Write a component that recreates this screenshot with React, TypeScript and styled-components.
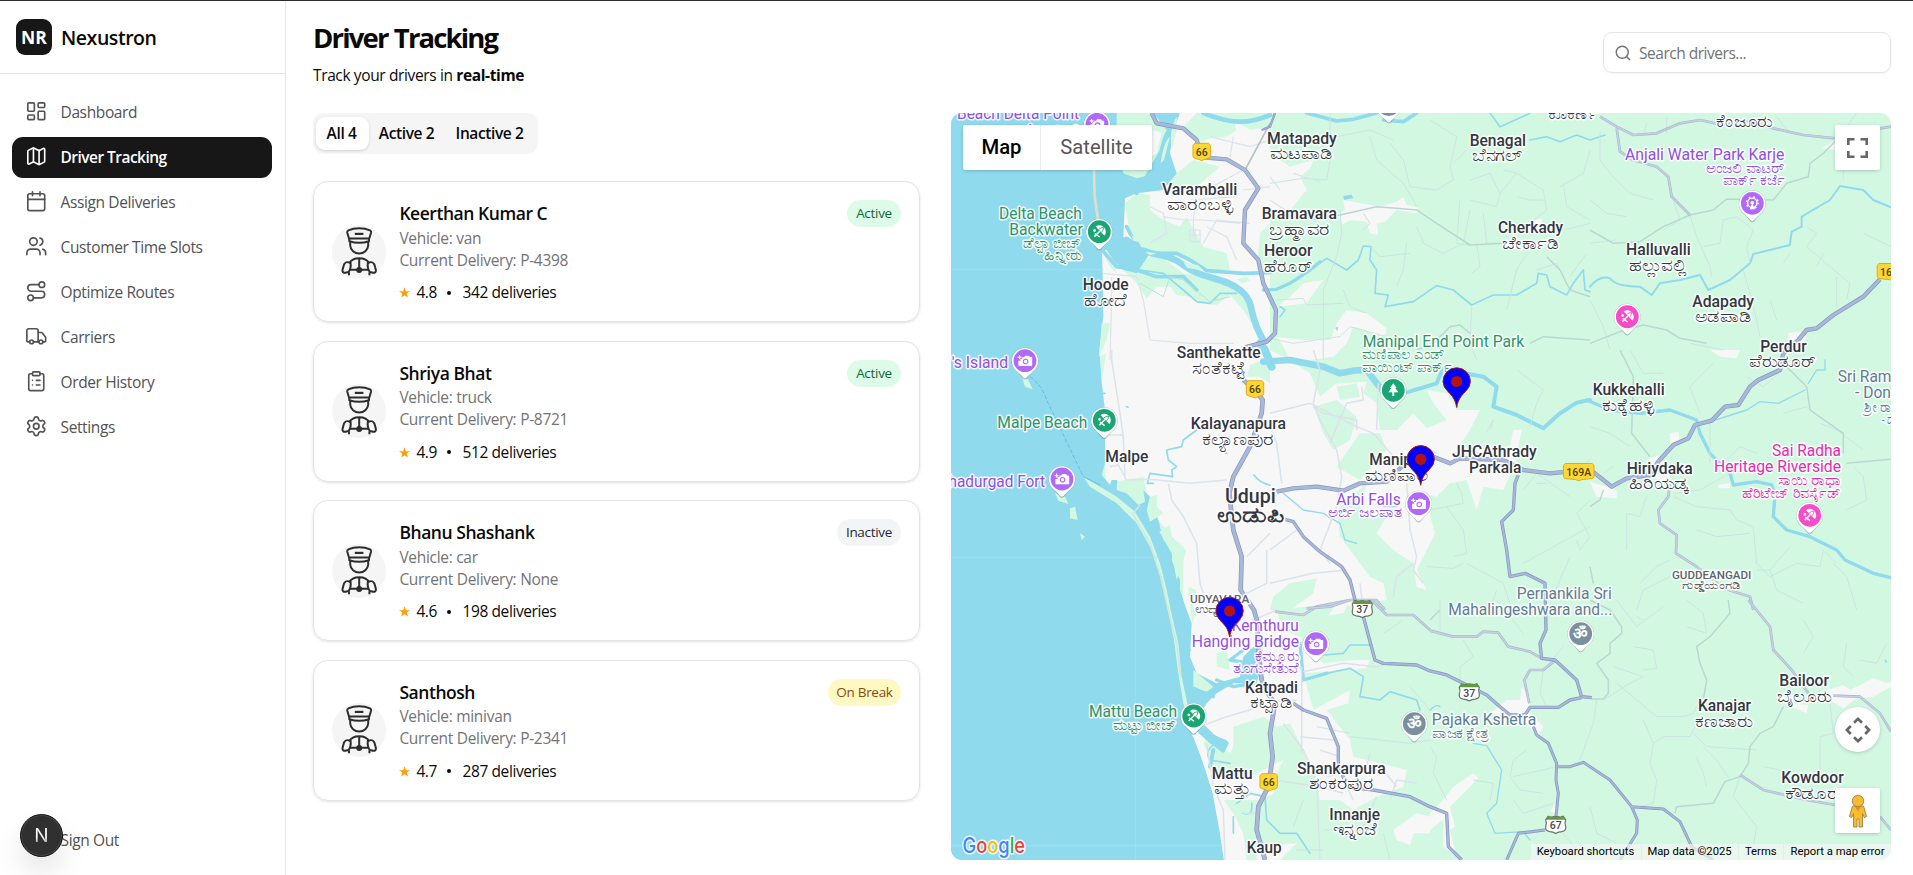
import React from 'react';
import styled, { createGlobalStyle } from 'styled-components';
import {
  Calendar, ClipboardList, LayoutDashboard, LogOut, Map as MapIcon, Route, Search, Settings, Truck, Users,
} from 'lucide-react';

const Global = createGlobalStyle`
  * { box-sizing: border-box; }
  html, body { margin: 0; height: 100%; background: #fff; overflow: hidden; }
  body { font-family: "Segoe UI", "Open Sans", "Noto Sans", sans-serif; color: #0a0a0a; }
`;

const Page = styled.div`
  display: flex;
  height: 100vh;
  border-top: 1px solid #2b2a33;
`;

/* ---------- Sidebar ---------- */
const Sidebar = styled.aside`
  display: flex;
  flex-direction: column;
  flex: none;
  width: 286px;
  border-right: 1px solid #e5e5e5;
`;
const Brand = styled.div`
  display: flex;
  align-items: center;
  gap: 9px;
  height: 73px;
  padding-left: 16px;
  border-bottom: 1px solid #e5e5e5;
`;
const BrandMark = styled.div`
  display: grid;
  place-items: center;
  width: 36px;
  height: 36px;
  border-radius: 9px;
  background: #171717;
  color: #fff;
  font-size: 17.5px;
  line-height: 20px;
  font-weight: 700;
`;
const BrandName = styled.div`
  font-size: 19.5px;
  font-weight: 600;
  letter-spacing: -0.45px;
`;
const Nav = styled.nav`
  display: flex;
  flex-direction: column;
  gap: 4px;
  padding: 18px 13px 0 12px;
`;
const NavItem = styled.a<{ $active?: boolean }>`
  display: flex;
  align-items: center;
  gap: 13px;
  height: 41px;
  padding: 0 13px 2px;
  border-radius: 11px;
  font-size: 15.5px;
  letter-spacing: ${(p) => (p.$active ? '-0.53px' : '-0.37px')};
  font-weight: ${(p) => (p.$active ? 600 : 400)};
  color: ${(p) => (p.$active ? '#fff' : '#525252')};
  background: ${(p) => (p.$active ? '#171717' : 'transparent')};
  svg { width: 22.5px; height: 22.5px; stroke-width: 1.75; flex: none; }
`;
const SideFoot = styled.div`
  margin-top: auto;
  padding: 0 13px 14px 12px;
`;
const DevBadge = styled.div`
  position: fixed;
  left: 20px;
  top: 814px;
  display: grid;
  place-items: center;
  width: 43px;
  height: 43px;
  border-radius: 50%;
  background: #303030;
  border: 1px solid #111;
  box-shadow: inset 0 0 0 1px #474747, 0 16px 32px -8px rgba(0, 0, 0, 0.24);
  color: transparent;
  font: 400 19px/20px Inter, sans-serif;
  span {
    background: linear-gradient(to bottom, #fff 55%, #8a8a8a 95%);
    background-clip: text;
    -webkit-background-clip: text;
  }
`;

/* ---------- Main ---------- */
const Main = styled.main`
  display: flex;
  flex-direction: column;
  flex: 1;
  min-width: 0;
  padding: 0 22px 15px 27px;
`;
const Header = styled.header`
  display: flex;
  justify-content: space-between;
  height: 112px;
`;
const Title = styled.h1`
  margin: 18px 0 0;
  font-size: 27.5px;
  line-height: 38px;
  font-weight: 700;
  letter-spacing: -1.85px;
  word-spacing: 1px;
`;
const Subtitle = styled.p`
  margin: 6px 0 0;
  font-size: 15.5px;
  line-height: 24px;
  letter-spacing: -0.37px;
`;
const SearchBox = styled.label`
  display: flex;
  align-items: center;
  gap: 7px;
  width: 288px;
  height: 41px;
  margin-top: 31px;
  padding: 0 10px;
  border: 1px solid #e5e5e5;
  border-radius: 9px;
  box-shadow: 0 1px 2px rgba(0, 0, 0, 0.05);
  color: #737373;
  svg { width: 18px; height: 18px; stroke-width: 1.9; flex: none; }
`;
const SearchInput = styled.input`
  flex: 1;
  min-width: 0;
  border: 0;
  outline: 0;
  padding: 0;
  background: none;
  font: inherit;
  font-size: 15.5px;
  letter-spacing: -0.48px;
  &::placeholder { color: #737373; opacity: 1; }
`;
const Body = styled.div`
  display: flex;
  gap: 31px;
  flex: 1;
  min-height: 0;
`;
const ListColumn = styled.section`
  display: flex;
  flex-direction: column;
  width: 607px;
  flex: none;
`;
const Tabs = styled.div`
  display: flex;
  align-self: flex-start;
  align-items: center;
  width: 225px;
  height: 41px;
  padding: 0 3px;
  border-radius: 11px;
  background: #f5f5f5;
  margin-bottom: 27px;
`;
const Tab = styled.button<{ $active?: boolean; $w: number }>`
  width: ${(p) => p.$w}px;
  height: 33px;
  padding: 0 2px 2px 0;
  border: 0;
  border-radius: 9px;
  background: ${(p) => (p.$active ? '#fff' : 'none')};
  box-shadow: ${(p) => (p.$active ? '0 1px 3px rgba(0,0,0,.14)' : 'none')};
  font: inherit;
  font-size: 15.5px;
  font-weight: 600;
  letter-spacing: -0.4px;
  color: #0a0a0a;
  white-space: nowrap;
`;
const Cards = styled.div`
  display: flex;
  flex-direction: column;
  gap: 18.5px;
`;
const Card = styled.article`
  display: flex;
  align-items: center;
  height: 141px;
  padding: 0 18px;
  border: 1px solid #e3e3e3;
  border-radius: 15px;
  box-shadow: 0 1px 3px rgba(0, 0, 0, 0.12);
`;
const Avatar = styled.div`
  width: 54px;
  height: 54px;
  border-radius: 50%;
  background: #f5f5f5;
  svg { display: block; overflow: visible; }
`;
const Info = styled.div`
  flex: 1;
  align-self: stretch;
  padding: 18px 0 0 13.4px;
`;
const Name = styled.div`
  font-size: 17.5px;
  line-height: 26.5px;
  font-weight: 600;
  letter-spacing: -0.45px;
`;
const Meta = styled.div`
  font-size: 15.5px;
  line-height: 22.3px;
  letter-spacing: -0.3px;
  color: #737373;
`;
const Rating = styled.div`
  display: flex;
  align-items: center;
  margin-top: 10px;
  font-size: 15.5px;
  line-height: 22px;
  letter-spacing: -0.4px;
  svg { margin: 1px 6px 0 0; }
`;
const Dot = styled.span`
  width: 4px;
  height: 4px;
  border-radius: 50%;
  background: #0a0a0a;
  margin: 1px 11.5px 0 10px;
`;
type Status = 'Active' | 'Inactive' | 'On Break';
const tones: Record<Status, [string, string, number]> = {
  Active: ['#dcfce7', '#166534', 54],
  Inactive: ['#f3f4f6', '#1f2937', 64],
  'On Break': ['#fef9c3', '#854d0e', 73],
};
const Badge = styled.span<{ $s: Status }>`
  align-self: flex-start;
  margin-top: 18px;
  width: ${(p) => tones[p.$s][2]}px;
  height: 27px;
  line-height: 27px;
  border-radius: 14px;
  text-align: center;
  background: ${(p) => tones[p.$s][0]};
  color: ${(p) => tones[p.$s][1]};
  font-size: 13.5px;
  letter-spacing: -0.3px;
`;

const DriverGlyph = () => (
  <svg width="54" height="54" viewBox="0 0 54 54" fill="none" stroke="#2d2d2d" strokeWidth="2" strokeLinejoin="round" strokeLinecap="butt">
    <path d="M17 13.5L15.2 7.5C15 6.3 15.5 5.8 16.4 5.3C22.5 2.4 31.8 2.4 38 5.3C38.9 5.8 39.4 6.3 39.1 7.5L37.3 13.5Z" />
    <path d="M22.8 8.9H31.4" strokeWidth="2.2" />
    <path d="M17.3 13.8V16.2C23 18 31.4 18 37 16.2V13.8" />
    <path d="M18.2 17V20.5C18.6 25.2 22.4 28.6 27.2 28.6C32 28.6 35.8 25.2 36.2 20.5V17" />
    <path d="M17.2 38.5C18.8 35.2 22.4 33.3 27.2 33.3C32 33.3 35.6 35.2 37.2 38.5M18 44.8H36.4M27.2 33.5V43" />
    <circle cx="27.2" cy="45" r="3" fill="#2d2d2d" strokeWidth="0" />
    <path d="M18.6 37.8C14 36.2 12.8 37.4 11.8 40.2L10.5 45C10.2 46.9 11.4 48 13.4 47.8L16.5 47C18.4 44.5 19 41 18.6 37.8ZM35.8 37.8C40.4 36.2 41.6 37.4 42.6 40.2L43.9 45C44.2 46.9 43 48 41 47.8L37.9 47C36 44.5 35.4 41 35.8 37.8Z" />
    <path d="M17 47.2V50.3M37.4 47.2V50.3" />
  </svg>
);

/* ---------- Map ---------- */
const MapPanel = styled.section`
  position: relative;
  flex: 1;
  border-radius: 11px;
  overflow: hidden;
  background: #d3f8e2;
  font-family: Roboto, sans-serif;
  svg { display: block; }
`;
const MapCanvas = styled.svg`
  width: 940px;
  height: 747px;
`;
const Town = styled.path`fill: #f7f7f7;`;
const Wood = styled.path`fill: #d3f8e2;`;
const Water = styled.path`fill: #90daee;`;
const River = styled.path<{ $w?: number }>`
  fill: none;
  stroke: #90daee;
  stroke-width: ${(p) => p.$w ?? 6};
  stroke-linejoin: round;
  stroke-linecap: round;
`;
const Lane = styled.path<{ $c?: string; $w?: number }>`
  fill: none;
  stroke: ${(p) => p.$c ?? '#dbe3ea'};
  stroke-width: ${(p) => p.$w ?? 3.5};
  stroke-linejoin: round;
`;
const Highway = ({ d, w = 11 }: { d: string; w?: number }) => (
  <>
    <Lane d={d} $c="#8696be" $w={w} />
    <Lane d={d} $c="#a8b8d8" $w={w - 4} />
  </>
);
const Street = ({ d }: { d: string }) => (
  <>
    <Lane d={d} $c="#a9b4cd" $w={8} />
    <Lane d={d} $c="#c7d0e2" $w={4.5} />
  </>
);
const tileAt = { A: [0, 0], B: [960, 0], C: [1920, -330], D: [0, 720], E: [960, 720], F: [1920, 720], G: [0, 1470], H: [1440, 1470] } as const;
const Tile = ({ id, children }: { id: keyof typeof tileAt; children: React.ReactNode }) => (
  <g transform={`translate(${tileAt[id][0]} ${tileAt[id][1]})`}>{children}</g>
);

const Terrain = () => (
  <g transform="translate(950 110) scale(0.33333)">
    <Tile id="A"><Town d="M500 9H960V750H445L458 500L452 420L520 380L525 260L590 210Z" /></Tile>
    <Tile id="B">
      <Town d="M0 130L60 170L130 150L120 175L90 200L110 240L60 300L0 330ZM220 270L330 290L380 275L400 262L410 285L445 293L440 310L380 300L345 335L320 340L325 375L300 370L290 335L240 330L215 345L205 310L225 300ZM20 590L60 560L100 520L160 510L130 550L110 580ZM20 680L100 690L180 690L200 640L230 600L290 610L350 655L345 680L300 665L250 650L230 700L190 740L120 750H60L40 710ZM780 335L815 325L820 360L790 370Z" />
    </Tile>
    <Tile id="D"><Town d="M445 0H960V780H700V600L600 480L580 380L470 400L465 340V180Z" /></Tile>
    <Tile id="E">
      <Town d="M0 0L40 20L120 70L150 140L200 100L290 95L280 130L320 160L330 240L380 240L430 190L470 235L530 210L490 160L470 120L530 130L560 180L630 180L600 240L560 300L640 290L720 290L730 240L755 240L745 290L740 330L700 420L640 410L620 480L590 390L540 400L500 440L460 430L495 550L470 600L440 660L470 720L440 710L430 640L370 600L320 550L350 500L270 480L290 400L200 480L210 560L270 640L300 680L340 700L350 750L220 770L130 780H0Z" />
    </Tile>
    <Tile id="F"><Town d="M170 330L205 315L230 350L245 400L200 390ZM240 250L265 245L270 280L240 290ZM0 395L80 420V445L20 440ZM360 0H450L440 25L390 20ZM385 405L420 400V415H385Z" /></Tile>
    <Tile id="C"><Town d="M695 445L740 420L760 420L735 450ZM595 1000L630 995L650 1015L620 1050H595Z" /></Tile>
    <Tile id="G">
      <Town d="M700 0H1200L1180 40L1040 60L1060 140L1120 190L1200 180L1260 180L1250 205L1060 220L1090 330L1200 270L1195 310L1130 330L1200 420L1210 470L1370 510L1360 560L1280 590L1210 630L1170 600L1110 600L1100 540L1050 430L1020 370L980 380L940 350L850 380L850 460L810 450L780 400L760 430L800 520L900 530L960 500L1000 480L980 520L970 580L930 600L820 600L850 640L880 700L890 780H820L705 300L720 150ZM920 740L1040 730L990 780H920ZM1330 690L1400 640L1440 650V700H1390L1380 735L1340 720Z" />
    </Tile>
    <Tile id="H">
      <Town d="M180 340L230 300L270 300L275 260L300 290V340L340 380L320 410L290 370L240 350ZM40 600L70 560L130 520L145 535L90 590L60 620L75 680L60 690L80 770L40 740ZM1060 310L1135 315L1130 340ZM1190 270L1240 255L1260 270L1330 235L1370 250L1383 245V260L1330 290L1280 295L1240 325L1200 300ZM360 635L375 610L385 640ZM0 640L40 600L50 650L0 690Z" />
    </Tile>

    <Tile id="A">
      <Wood d="M740 9H830L850 30L860 60L830 80L780 85L755 95L700 50ZM600 230L680 190L730 150L810 170L740 230L700 250L640 235ZM525 280L560 250L600 255L600 300L640 330L690 350L710 320L760 410L830 430L840 480L760 480L690 440L600 430L540 370ZM930 370L960 340V480H920ZM830 9H960V50L900 60L850 30ZM520 480L620 430L700 490L790 500L860 540L900 590L905 640L880 600L840 555L800 585L760 580L720 560L680 555L660 530L620 530L590 565L560 520Z" />
    </Tile>
    <Tile id="D"><Wood d="M900 45L960 20V100L930 80L890 80ZM448 20L468 10L455 100Z" /></Tile>
    <Tile id="E">
      <Wood d="M130 170L200 150L260 200L240 270L190 300L160 250ZM270 250L330 250L350 300L310 345L270 390L200 350ZM60 700L140 685L130 730L60 780H0L10 740ZM200 110L260 100L270 140L210 150Z" />
    </Tile>
    <Tile id="G"><Wood d="M980 30L1160 10L1100 100L1050 110L1000 90ZM800 160L830 150L840 210L800 200ZM860 400L940 400L1000 440L960 490L880 500L840 470Z" /></Tile>

    <Water d="M3 9H690L670 60L660 130L680 190L640 240L560 250L525 265L520 380L600 430L590 445L560 490L520 480L456 420L458 500L460 620L448 720L455 820L465 900V1060L455 1095L480 1125L485 1110H502L500 1140L530 1150L565 1185L585 1175L580 1140L600 1160L625 1230L640 1290L670 1320L665 1350L690 1410V1440L710 1500L725 1540L720 1640L740 1690L800 1720L870 1700L880 1640L910 1610L940 1620L920 1650L930 1680L920 1720L850 1720L800 1750L770 1780L740 1830L800 1880L830 1890L820 1930L780 1900L735 1860L760 1960L790 2050L810 2160L822 2250H3Z" />
    <Wood d="M500 9H610L650 60L640 80L620 150L600 195L560 205L520 190L500 110ZM660 80Q640 95 632 160L642 150ZM455 420L470 420L490 450L500 490L480 470ZM480 640L470 690L448 740L455 640ZM600 1160L622 1155L620 1190L640 1210L600 1235L590 1200ZM628 1265L660 1245L665 1280L700 1310L708 1325L680 1410L665 1330ZM715 1430L740 1440L730 1465L715 1460ZM720 1480L745 1500L725 1540ZM730 1680L790 1730L770 1745L730 1735ZM215 798L235 810L248 838L225 830ZM360 1195L375 1190L383 1230L360 1225ZM390 1270L405 1280L395 1290ZM315 1150L345 1160L355 1182L325 1172Z" />
    <Wood d="M400 1100L500 1160L555 1205L600 1280L630 1360L650 1440L662 1500L685 1600L695 1700L712 1780L735 1880H728L700 1780L685 1690L672 1590L652 1490L635 1400L600 1310L560 1240L500 1180L420 1130Z" />
    <Town d="M548 85L610 60L635 70L620 130L590 150L550 120ZM722 1860L745 1880L775 1980L800 2080L822 2160L835 2250H822L808 2160L788 2050L758 1955Z" />
    <Lane $c="#e3dccb" $w={8} d="M432 180L434 260L444 330" />
    <Lane $c="#cfe9dd" $w={5} d="M548 1210L600 1300L632 1400L655 1500L680 1600L692 1700" />

    <Tile id="A">
      <River $w={20} d="M530 390C600 450 640 420 700 465S820 500 870 540S890 610 940 690" />
      <River $w={11} d="M530 350Q550 400 600 430L680 430L720 450L770 482L880 490L960 488M456 420L500 470L560 480L620 500L700 500L740 540M630 130L590 200L560 250" />
      <River $w={14} d="M760 9C850 45 900 40 960 15" />
      <River $w={5} d="M570 480L640 490L700 540L740 575L780 580L810 550L860 550" />
      <Wood d="M585 425L620 430L600 436ZM700 456L745 466L762 482L712 474ZM565 396L590 402L600 415L575 412ZM545 376L560 384L566 396L550 392ZM860 508L890 500L900 512L875 520ZM680 20Q655 60 665 120L680 60Z" />
    </Tile>
    <Tile id="D"><River $w={24} d="M930 -20L945 0L965 50" /></Tile>
    <Tile id="B">
      <River $w={10} d="M-20 540L20 538L60 520L120 480L150 455" />
      <River $w={5} d="M120 480L170 445L230 480L265 450L280 408L303 410L300 450L320 480L315 550L355 555L345 590L430 575L500 527L550 540L605 585L670 555L740 555L800 520L805 490L830 495L840 530L890 555L910 520L940 480L945 540L960 545M660 9L690 50L780 10M780 90L830 80L870 95L920 75L960 90L1005 75M30 590L45 600L30 620" />
      <River $w={11} d="M110 9L200 33L250 28L320 9M340 30L400 35L440 9" />
      <Water d="M220 258L245 254L250 264L222 270ZM195 653L205 650L202 664Z" />
    </Tile>
    <Tile id="E">
      <River $w={20} d="M-20 35L60 30L160 50L210 70L250 62L290 60L320 100L345 130" />
      <River $w={12} d="M345 130L400 130L500 100L520 50L560 65L640 80L680 110L670 170L740 195L820 235L870 190L920 158L960 150" />
      <River $w={4} d="M40 430L100 480L160 490L210 520L225 570L260 580M340 470H380" />
    </Tile>
    <Tile id="F">
      <River $w={10} d="M-10 150L60 180L150 190L240 180L320 210L330 250L360 310L420 370L430 405L500 395L545 405L555 430L550 500L590 540L660 560L740 600L765 630L850 670L903 683" />
      <River $w={4} d="M330 225L470 180L510 155L565 160L645 120M655 100L680 60H705V30" />
    </Tile>
    <Tile id="C"><River $w={6} d="M0 860Q30 825 60 835Q75 860 150 860L185 885L210 850L270 840L330 825L355 870L420 840L480 790L490 762L600 735L605 695L635 680L635 650L720 600L750 558L820 570L850 600L903 622" /></Tile>
    <Tile id="D"><River $w={5} d="M740 240L700 270L695 290L650 300L655 330L680 350L665 360L668 380L600 370L592 400L610 400M530 170L534 172M455 130L465 130M912 375Q930 400 960 405M810 300L830 310" /></Tile>
    <Tile id="G">
      <River $w={10} d="M880 150L840 180L900 190M800 240L850 260L910 250M700 230L720 260L790 290M1050 130L1060 240L1130 220" />
      <River $w={5} d="M1130 220L1200 205L1240 230L1230 290L1290 300L1320 275L1400 300L1410 330M1120 165L1180 160L1200 135L1260 135M860 610L900 580L945 590L950 660L990 700H1040L1080 760M700 180L720 150" />
      <River $w={12} d="M750 370L790 410L830 430L820 450M780 500L790 450" />
      <River $w={5} d="M800 430Q760 450 780 480L840 490M850 650L850 700M880 640Q910 650 905 610" />
    </Tile>
    <Tile id="H"><River $w={4} d="M130 430L170 437L215 510L200 610L170 640L195 700L280 695L300 720M0 330Q20 310 30 320M1365 180L1370 186" /></Tile>

    <Lane $c="#a6e2ef" $w={2} d="M556 620V620M3 478H460M3 1342H630M556 1230V2250M3 2207H815" />
    <Lane $c="#64bedc" $w={3} strokeDasharray="12 6" d="M240 800Q275 825 290 870L400 1100" />
    <Lane $c="#64bedc" $w={3} d="M400 1100L450 1125" />

    <Tile id="A">
      <Lane d="M485 500V560L480 750M458 490L560 500L580 570L600 690L720 700L850 700M600 290L640 310L650 370L600 400M640 320L700 330L760 330L870 340M740 230L730 330L730 380M770 350L830 380L860 450M850 80L840 140M750 250L880 180M960 230L880 240M900 340L800 330L760 400M720 270L860 260M780 80L900 110L960 90" />
      <Lane $c="#b9c2c6" $w={5} d="M885 180L960 40" />
      <Lane $c="#c3dfd8" $w={3} d="M570 520L640 560L660 500L700 510L780 575L840 560" />
      <Lane d="M720 360h30v35h-30zM715 375h40M735 355v40" />
    </Tile>
    <Tile id="B">
      <Lane $c="#cce5df" $w={3} d="M180 9V150L170 210L100 205L0 220M160 750V540L200 440L215 370L210 300M300 80L320 150L400 220L430 270L440 290M480 30L560 80L540 170L550 210L500 240L420 230M370 90L300 60L200 80M420 230L400 150L360 100M570 270L560 400L600 405M700 180L740 190L820 240L830 300L780 340M740 190L690 250L680 290L600 270M690 250L660 190L600 210M620 400L630 470L605 490M740 480L720 555M770 430L740 480L710 600M410 400L400 480L380 530M440 350L460 400L520 430L580 400L600 300M960 340L880 360L780 375M640 310L650 400L690 400M300 410L330 440L420 430M605 590L600 700L620 750M220 540L240 590L290 610M950 430L900 500M870 230L940 190L960 120M880 220L890 290L960 330M0 685L70 700L210 680L240 650L350 680M20 570L100 565L110 585L220 580M590 120L550 160M800 480L860 460L890 520M820 270L780 270L740 260" />
      <Lane $c="#bcd6cf" $w={4.5} d="M380 295L440 300L500 340L600 405L700 400M120 330L210 315L320 290L380 295M830 440L870 480L900 540L960 560M440 720L490 700L540 650L570 645L600 670M780 700L820 680L960 690" />
      <Lane d="M0 270L60 310L120 350M70 190L150 215M0 200L30 240M280 310L300 340L280 360M100 330H200" />
    </Tile>
    <Tile id="C">
      <Lane $c="#cce5df" $w={3} d="M60 520L120 580L190 600M30 400V480L60 520M0 600L50 640L110 650M230 350V400M170 370L160 410M300 645L320 710L360 800L365 830M340 740L390 730L400 660L440 650L490 690L470 740L480 790M460 810L480 880L500 960L510 1010M600 760L580 790M650 680L680 700L650 740L720 800L780 850L770 900M700 760L680 800M740 830L740 920M820 700L903 740M760 540V500M540 900L560 960M600 400L560 350M770 380L800 339M300 1030L400 1050M0 900L40 980L60 1050M250 600L270 660L220 690M0 730L80 720" />
      <Lane $c="#b9d8cf" $w={4.5} d="M0 690L70 730L150 725L220 680L300 645L370 630L410 597L550 600L590 550L655 530L660 490L700 460L740 420M0 1030L90 995L160 975L230 990L270 1015L350 1030" />
    </Tile>
    <Tile id="D">
      <Lane $w={4.5} d="M485 0V30L510 190L520 260L525 385M480 350L505 345L530 390L600 388L720 400L830 390M655 400L665 450L700 500L740 580L750 700L760 730M960 550L890 620M950 600V700L890 730M465 255H520L518 265M550 490L570 465" />
    </Tile>
    <Tile id="E">
      <Lane $w={4.5} d="M0 190L120 160L260 230L310 250L380 330M130 160L150 210L200 300L215 380L200 470L150 600L180 640M0 230L20 280L35 400M260 240V210L160 190L130 170M180 280L230 160L280 150L275 110M130 0L150 60L130 160M325 100L320 240M410 400L420 540L440 620L430 660L460 700M0 600L80 540M0 700L130 670L230 660M430 640L380 680L370 740M270 700L280 780M460 290L500 310" />
      <Lane $c="#cce5df" $w={3} d="M480 480L580 460L575 430L560 400M530 470L580 540L590 610L550 620M580 640L550 655L470 650M590 640L700 700L720 760M760 420L800 370L900 440M800 400L830 400M960 330L880 390M760 640L960 530M660 240L670 210L650 245M780 230L800 160L820 120L740 60M960 450L920 490L960 560L930 600L920 570M660 780L680 720M840 760L900 620" />
    </Tile>
    <Tile id="F">
      <Lane $c="#cce5df" $w={3} d="M370 40L300 110L330 190M0 230L60 250L120 290M70 350L40 370M250 430L330 420L420 370M250 440L320 470L420 480L440 510L490 530L500 640L540 680M170 440L150 500L110 490L110 600M320 540L380 560L480 550M150 700L200 650L240 630M240 680L160 720L140 780M540 680L620 640L690 650L700 600L740 640M730 640L770 680L800 780M540 660L560 720L640 760M580 190L650 170L700 210L760 250M690 220L740 240L820 300M770 480L830 450L820 380L790 350M400 340L450 290L500 310M360 340V200M470 80L520 110L580 60M120 0L160 70L220 70M600 590L540 660L500 660" />
      <Lane $c="#b9d8cf" $w={4.5} d="M90 0L130 80L125 250L180 320M580 40L650 110L660 180L760 250L760 310M770 340L903 328M0 470L30 450L40 420M0 650L10 700" />
    </Tile>
    <Tile id="G">
      <Lane $w={4.5} d="M750 380L830 350L900 330L940 310M900 100L910 60L980 30M1060 215L1180 190L1280 200L1300 195M1055 200V460M940 310L1010 300L1040 300M1000 370L1060 450L1100 540L1110 780M1050 410L1150 420M1110 450L1170 470M1180 490L1190 560L1210 600M1200 510H1300L1340 560M1130 530L1250 500L1260 460M970 540L1110 560L1180 580M770 430L790 560L820 630L825 780M1280 590L1240 680L1120 690M1320 600L1340 540L1400 550M880 640L920 640" />
      <Lane $c="#cce5df" $w={3} d="M1200 410L1380 430L1440 420M1100 380L1200 400M1380 260L1440 330M1300 700L1320 780M1060 600L1030 680M1040 750H1120M1300 100L1360 60" />
    </Tile>
    <Tile id="H">
      <Lane $c="#cce5df" $w={3} d="M100 120L130 170L90 200V240M30 90V0M200 0L280 100M340 210L330 280L350 320M400 140L340 210M290 450L250 480L240 530L270 570L340 580M380 500L250 530M250 600L280 640L370 610M500 300L490 370L450 480M520 300L600 250L640 230L550 200M610 140L670 150L680 205L640 210M560 250L680 350L760 350L790 340L820 280M640 360L670 430L660 490L680 540L670 610L630 620M800 370L780 410L700 410L670 430M790 400L830 440L980 450M800 470L820 520L830 560M620 50L640 60M770 80L830 100L820 40L770 0M1120 60L1150 110L1120 160M1250 130L1240 200L1270 230M1290 180L1340 190L1370 130M1200 310L1210 400L1170 410V520M930 530L910 590L980 680L970 740M820 440L860 480L900 540M480 620L500 700L560 730M0 440L20 470L10 520L50 600M130 540L190 550L180 600M400 700L440 750M1000 500L1050 510M560 0L620 80L700 20" />
      <Lane $c="#b9d8cf" $w={4.5} d="M480 0L540 30L575 80L575 100L540 130V160L500 190L535 240V280L520 297H485M895 0L900 40L840 110L800 140L810 190L830 240L820 300M1060 320L1030 380L990 400L960 440L955 490L930 530L885 545L850 610L740 620L735 640M0 60L30 30" />
    </Tile>

    <Tile id="C"><Street d="M30 350L80 380L130 405L200 400L270 370L330 360L400 375L480 365L550 385L640 405L735 415M80 385L90 455L130 480L200 500L235 530L245 590L300 645M870 385L903 380" /></Tile>
    <Tile id="F"><Street d="M240 400L235 440L205 480L210 520L260 555L258 610L320 650L400 715L480 740L490 780" /></Tile>
    <Tile id="G"><Street d="M975 35L1060 45L1100 20L1200 0M1265 0L1310 45L1390 45L1440 90" /></Tile>
    <Tile id="E"><Street d="M110 775L180 770L240 750L320 750L345 780" /></Tile>
    <Tile id="H"><Street d="M0 92L70 110L140 110L160 95L205 98L235 140L300 155L340 178M375 182L340 210H300L283 240L298 310M955 0L1020 80L1030 150L1085 210L1135 280M1210 287L1290 290L1350 340L1383 395M930 525L1000 570L1130 600L1215 615M1350 650L1383 690" /></Tile>

    <Tile id="A"><Highway d="M605 9L620 40L700 55L740 90L760 142L830 148L885 180L925 235L885 300L880 400L925 450L940 520L978 600L975 670L950 695L885 712" w={13} /></Tile>
    <Tile id="B"><Highway d="M-25 60L0 50L15 9" w={7} /></Tile>
    <Tile id="D"><Highway d="M880 90L915 120L938 150L935 190L900 290L850 380L838 430L850 540L875 620L872 720L912 780L922 815L925 900L935 990L960 1040L975 1060L960 1150L968 1220L955 1310L925 1370L920 1440L945 1530" w={14} /></Tile>
    <Tile id="E">
      <Highway d="M20 425L70 415L140 410L220 422L270 400L350 395L400 345L490 320L540 340L570 325L700 330L760 360L840 370L960 358L1025 410L1070 385L1140 375L1165 335L1210 285L1255 265L1275 225L1325 212L1365 170L1405 165L1440 110L1465 90L1530 60L1540 10L1585 -30L1610 -60L1640 -65L1690 -105L1780 -160L1830 -212" w={13} />
      <Highway w={10} d="M745 375L735 400L730 480L695 515L710 600L720 680L765 670L825 700L828 840L810 880L815 925L855 930L920 990L935 1040L965 1043" />
      <Highway w={10} d="M45 508L70 515L100 560L150 605L215 650L240 690L255 750L280 800L315 930L340 940L440 945L480 963L530 975L580 1000L650 1035L690 1070L720 1095L765 1095L780 1072L865 1072L900 1050L935 1043" />
    </Tile>
    <Tile id="G"><Highway w={10} d="M1030 310L1060 330L1130 355L1165 440V490L1190 560L1270 570L1380 590L1440 620L1490 640L1495 740L1535 780" /></Tile>
    <Tile id="H"><Highway w={9} d="M310 380L320 405L355 430L380 490L378 540L385 580L378 650M385 500L420 500L460 487L540 540L605 620L700 627L750 665L785 740L850 780M605 620L622 660L620 700L570 780M345 690L265 700L230 780" /></Tile>
  </g>
);

const Halo = styled.text`
  paint-order: stroke;
  stroke: rgba(255, 255, 255, 0.9);
  stroke-width: 3px;
  stroke-linejoin: round;
`;
/* [text, left, right, baseline] in map pixels; kind selects size, weight and colour */
type Row = [string, number, number, number];
const kinds = {
  town: { size: 16.2, weight: 500, fill: '#34373f' },
  townKn: { size: 16.5, weight: 500, fill: '#34373f' },
  city: { size: 20.5, weight: 500, fill: '#34373f' },
  cityKn: { size: 20.5, weight: 700, fill: '#34373f' },
  area: { size: 10.5, weight: 500, fill: '#606468' },
  purple: { size: 16.2, weight: 400, fill: '#9150dd' },
  purpleKn: { size: 13.5, weight: 400, fill: '#9150dd' },
  green: { size: 16.2, weight: 400, fill: '#2d9468' },
  greenKn: { size: 13.5, weight: 400, fill: '#2d9468' },
  pink: { size: 16.2, weight: 400, fill: '#e62bae' },
  pinkKn: { size: 13.5, weight: 400, fill: '#e62bae' },
  slate: { size: 16.2, weight: 400, fill: '#607d92' },
  slateKn: { size: 13.5, weight: 400, fill: '#607d92' },
};
const labels: Record<keyof typeof kinds, Row[]> = {
  town: [
    ['Varamballi', 1162, 1237.3, 194.7], ['Hoode', 1082.7, 1128.7, 290], ['Santhekatte', 1176.7, 1260.7, 358],
    ['Matapady', 1267, 1336.7, 143.7], ['Benagal', 1469.7, 1526, 145.7], ['Bramavara', 1261.7, 1337, 219],
    ['Heroor', 1264, 1312.7, 256], ['Cherkady', 1498, 1563, 233.3], ['Halluvalli', 1626, 1690.7, 255.3],
    ['Adapady', 1692.3, 1754, 307.3], ['Perdur', 1760.3, 1806.7, 352], ['Malpe', 1105.3, 1148.3, 462],
    ['Kalayanapura', 1190.7, 1286, 429.3], ['Manipal', 1369.3, 1424, 465], ['JHCAthrady', 1452, 1536.7, 457],
    ['Parkala', 1469, 1521.3, 472.7], ['Kukkehalli', 1592.7, 1664.7, 394.7], ['Hiriydaka', 1626.7, 1692.7, 473.7],
    ['Katpadi', 1245, 1298, 692.7], ['Mattu', 1211.7, 1252.7, 778.7], ['Shankarpura', 1297, 1385.7, 773.7],
    ['Innanje', 1329.3, 1380, 820], ['Kaup', 1246.7, 1281.7, 853.3], ['Kanajar', 1698, 1751, 710.7],
    ['Bailoor', 1779.3, 1829, 686.3], ['Kowdoor', 1781.3, 1843.7, 783],
  ],
  townKn: [
    ['ವಾರಂಬಳ್ಳಿ', 1167.3, 1232.7, 210], ['ಹೋದೆ', 1084, 1126.7, 305.7], ['ಸಂತೆಕಟ್ಟೆ', 1191.7, 1245, 374],
    ['ಮಟಪಾಡಿ', 1269.5, 1332.7, 159], ['ಬೆನಗಲ್', 1472, 1523, 160.7], ['ಕೂಕರ್ಣೆ', 1547.7, 1598, 119.3],
    ['ಬ್ರಹ್ಮಾವರ', 1269, 1329.7, 235], ['ಹೆರೂರ್', 1264, 1313, 271.7], ['ಚೇರ್ಕಾಡಿ', 1502, 1558.7, 249],
    ['ಕೆಂಜೂರು', 1715.7, 1772.3, 127.3], ['ಹಲ್ಲುವಲ್ಲಿ', 1629, 1687.3, 270.7], ['ಅಡಪಾಡಿ', 1694.7, 1751.7, 322.3],
    ['ಪೆರುಡೂರ್', 1749.3, 1816.7, 367.3], ['ಕಲ್ಯಾಣಪುರ', 1201.7, 1274, 445], ['ಮಣಿಪಾಲ', 1365, 1428, 480.7],
    ['ಕುಕ್ಕೆಹಳ್ಳಿ', 1601.7, 1654.3, 410.7], ['ಹಿರಿಯಡ್ಕ', 1629.3, 1689.3, 489], ['ಕಟ್ಪಾಡಿ', 1250.3, 1292.7, 708.3],
    ['ಮತ್ತು', 1214.3, 1250, 794.3], ['ಶಂಕರಪುರ', 1308.7, 1373, 789.3], ['ಇನ್ನಂಜೆ', 1332.7, 1376.7, 835],
    ['ಕಣಜಾರು', 1695, 1752.7, 726.7], ['ಬೈಲೂರು', 1776.7, 1831.7, 702], ['ಕೌಡೂರು', 1785.3, 1843, 798.7],
  ],
  city: [['Udupi', 1225, 1275.7, 502.7]],
  cityKn: [['ಉಡುಪಿ', 1217.3, 1284, 522]],
  area: [['UDYAVARA', 1190, 1249.3, 602.7], ['ಉದ್ಯಾವರ', 1195, 1243, 613], ['GUDDEANGADI', 1672, 1751.3, 579], ['ಗುಡ್ಡೆಯಂಗಡಿ', 1681.7, 1741, 589]],
  purple: [
    ['Beach Delta Point', 957, 1079, 119], ["'s Island", 951.7, 1008, 368.3], ['hadurgad Fort', 948.5, 1045, 486.7],
    ['Anjali Water Park Karje', 1625, 1784.3, 160], ['Arbi Falls', 1336.3, 1400.7, 505],
    ['Kemthuru', 1231.7, 1298.7, 631], ['Hanging Bridge', 1191.7, 1299, 647],
  ],
  purpleKn: [
    ['ಡೆಲ್ಟಾ ಬೀಚ್', 1022, 1079, 134], ['ಅಂಜಲಿ ವಾಟರ್', 1706, 1784.3, 172.7], ['ಪಾರ್ಕ್ ಕರ್ಜೆ', 1723.3, 1784.3, 185.3],
    ['ಅರ್ಬಿ ಜಲಪಾತ', 1327.7, 1401.7, 517.3], ['ಕೆಮ್ಮೂರು', 1255, 1298.7, 660.7], ['ತೂಗುಸೇತುವೆ', 1233.3, 1298.7, 673.3],
  ],
  green: [
    ['Delta Beach', 999, 1081.7, 219], ['Backwater', 1009.3, 1082.7, 235], ['Malpe Beach', 997.3, 1087.3, 427.7],
    ['Manipal End Point Park', 1362.7, 1524.3, 346.7], ['Mattu Beach', 1089, 1177, 717.3],
  ],
  greenKn: [
    ['ಡೆಲ್ಟಾ ಬೀಚ್', 1023.3, 1081.7, 248.3], ['ಹಿನ್ನೀರು', 1044.3, 1081.7, 260], ['ಮಣಿಪಾಲ ಎಂಡ್', 1362.3, 1445, 359],
    ['ಪಾಯಿಂಟ್ ಪಾರ್ಕ್', 1362.3, 1451, 372.3], ['ಮಟ್ಟು ಬೀಚ್', 1113.3, 1177, 730.3],
  ],
  pink: [['Sai Radha', 1772, 1841, 455.7], ['Heritage Riverside', 1714, 1841, 471.7]],
  pinkKn: [['ಸಾಯಿ ರಾಧಾ', 1777.7, 1840.3, 485], ['ಹೆರಿಟೇಜ್ ರಿವರ್ಸೈಡ್', 1741.7, 1841, 497.7]],
  slate: [
    ['Pernankila Sri', 1516.7, 1611.7, 599], ['Mahalingeshwara and...', 1448.3, 1612.3, 614.7],
    ['Pajaka Kshetra', 1431.7, 1536.3, 724.7], ['Sri Ram', 1837.7, 1891.5, 382], ['- Don', 1855, 1891, 398],
  ],
  slateKn: [['ಪಾಜಕ ಕ್ಷೇತ್ರ', 1431.7, 1489, 737.7], ['ಶ್ರೀ ರಾ', 1864, 1891, 411.7], ['- ದ', 1881.7, 1894, 423.5]],
};

type Glyph = 'camera' | 'umbrella' | 'tree' | 'om' | 'wheel';
const glyphs: Record<Glyph, React.ReactNode> = {
  camera: (
    <g>
      <path fill="#fff" fillRule="evenodd" d="M-2.6-3.6H-.8L0-5H4L5-3.6H6.6Q7.2-3.6 7.2-3V4.6Q7.2 5.2 6.6 5.2H-6Q-6.6 5.2-6.6 4.6V0H-4.6V-2H-2.6ZM.6-2A2.8 2.8 0 1 0 .6 3.6A2.8 2.8 0 1 0 .6-2Z" />
      <circle cx=".6" cy=".8" r="1.7" fill="#fff" />
      <path d="M-5.4-5.4V-1.4M-7.4-3.4H-3.4" stroke="#fff" strokeWidth="1.2" />
    </g>
  ),
  umbrella: (
    <g transform="rotate(45)" fill="none" stroke="#fff">
      <path d="M-6.2-1A6.2 5.4 0 0 1 6.2-1Z" fill="#fff" strokeWidth="0" />
      <path d="M0-1V7" strokeWidth="1.5" />
      <path d="M-2-1.2Q-2-4 0-6Q2-4 2-1.2" stroke="currentColor" strokeWidth=".8" />
      <circle cx="-4.2" cy="2.6" r="1.4" fill="#fff" strokeWidth="0" />
      <path d="M-2 4.5L4 3.5" strokeWidth="1.3" />
    </g>
  ),
  tree: <path fill="#fff" d="M0-7L3.4-2.4H2L5 2H1V5.6H-1V2H-5L-2-2.4H-3.4Z" />,
  om: <text textAnchor="middle" y="5.5" fontSize="16" fill="#fff" fontFamily="DejaVu Sans, sans-serif" fontWeight="700">ॐ</text>,
  wheel: (
    <g fill="none" stroke="#fff">
      <circle r="4.6" strokeWidth="1.4" cy="-.6" />
      <circle r="5.8" strokeWidth="1.6" strokeDasharray="1.7 2.9" cy="-.6" />
      <circle r="1.8" fill="#fff" cy="-.6" strokeWidth="0" />
      <path d="M0 0L-2.6 6H2.6Z" fill="#fff" strokeWidth="0" />
    </g>
  ),
};
const places: [number, number, string, Glyph][] = [
  [1097, 124.3, '#b069fa', 'camera'], [1099.3, 231.7, '#1aa672', 'umbrella'], [1388.8, 104.7, '#7b909c', 'om'],
  [1752.3, 203.3, '#b069fa', 'wheel'], [1627.3, 316.7, '#f74bc9', 'umbrella'], [1025, 360.7, '#b069fa', 'camera'],
  [1104.3, 420.3, '#1aa672', 'umbrella'], [1062, 479, '#b069fa', 'camera'], [1393.3, 390.3, '#1aa672', 'tree'],
  [1418.7, 503.7, '#b069fa', 'camera'], [1809.7, 515.3, '#f74bc9', 'umbrella'], [1316, 643.7, '#b069fa', 'camera'],
  [1193.7, 716, '#1aa672', 'umbrella'], [1414.3, 723.7, '#7b909c', 'om'], [1580.7, 633.7, '#7b909c', 'om'],
];
const Poi = ({ x, y, color, glyph }: { x: number; y: number; color: string; glyph: Glyph }) => (
  <g transform={`translate(${x} ${y})`} color={color}>
    <path d="M0 18.8C-2.6 18.8-3.6 14.8-9 10.4A13.4 13.4 0 1 1 9 10.4C3.6 14.8 2.6 18.8 0 18.8Z" fill="#5a6a70" opacity=".4" />
    <path d="M0 17.6C-1.8 17.6-3 14.8-8.8 10A13.1 13.1 0 1 1 8.8 10C3 14.8 1.8 17.6 0 17.6Z" fill="#fff" />
    <circle r="11.4" fill={color} />
    {glyphs[glyph]}
  </g>
);
const NationalShield = ({ x, y, n }: { x: number; y: number; n: string }) => {
  const w = n.length > 2 ? 15.3 : 8.7;
  return (
    <g transform={`translate(${x} ${y})`}>
      <path d={`M${-w + 2}-8.3H${w - 2}L${w}-6.5V4.5Q${w} 6.4 ${w - 2.4} 6.8L3 7.8L0 9L-3 7.8L${-w + 2.4} 6.8Q${-w} 6.4 ${-w} 4.5V-6.5Z`} fill="#fdd835" stroke="#e0ab15" />
      <text textAnchor="middle" y="4" fontSize="10.5" fontWeight="500" fill="#50400c">{n}</text>
    </g>
  );
};
const StateShield = ({ x, y, n }: { x: number; y: number; n: string }) => (
  <g transform={`translate(${x} ${y})`}>
    <path d="M-7.5-8.6L-4.5-7.6L0-8.4L4.5-7.6L7.5-8.6L10-5Q8.6-2 10 2Q10.6 6.2 6 6.8Q2.5 7 0 8.6Q-2.5 7-6 6.8Q-10.6 6.2-10 2Q-8.6-2-10-5Z" fill="#fff" stroke="#6c6f6a" strokeWidth="1.2" />
    <path d="M-7.5-8.6L-4.5-7.6L0-8.4L4.5-7.6L7.5-8.6L9.5-5H-9.5Z" fill="#5f9c37" />
    <text textAnchor="middle" y="4.4" fontSize="10.5" fontWeight="500" fill="#464a4e">{n}</text>
  </g>
);
const DriverPin = ({ x, y }: { x: number; y: number }) => (
  <g transform={`translate(${x} ${y})`}>
    <path d="M0 26C-1.4 17.5-4.5 14.5-8.4 10.4Q-13.7 5.5-13.7 0A13.7 13.7 0 1 1 13.7 0Q13.7 5.5 8.4 10.4C4.5 14.5 1.4 17.5 0 26Z" fill="#00f" stroke="#b31412" />
    <circle r="5.6" fill="#b31412" />
  </g>
);

const Control = styled.div<{ $x: number; $y: number; $round?: boolean }>`
  position: absolute;
  left: ${(p) => p.$x}px;
  top: ${(p) => p.$y}px;
  display: grid;
  place-items: center;
  width: 45px;
  height: 45px;
  border-radius: ${(p) => (p.$round ? '50%' : '2px')};
  background: #fff;
  box-shadow: 0 1px 4px -1px rgba(0, 0, 0, 0.3);
`;
const TypeSwitch = styled.div`
  position: absolute;
  left: 12px;
  top: 12px;
  display: flex;
  height: 45px;
  border-radius: 2px;
  background: #fff;
  box-shadow: 0 1px 4px -1px rgba(0, 0, 0, 0.3);
`;
const TypeButton = styled.div<{ $on?: boolean }>`
  display: grid;
  place-items: center;
  width: ${(p) => (p.$on ? 78 : 111)}px;
  padding-bottom: 1px;
  border-right: ${(p) => (p.$on ? '1px solid #ececec' : 0)};
  font-size: 20.25px;
  font-weight: ${(p) => (p.$on ? 500 : 400)};
  color: ${(p) => (p.$on ? '#000' : '#565656')};
`;
const Legal = styled.div`
  position: absolute;
  right: 0;
  bottom: 0;
  display: flex;
  gap: 1px;
  height: 16px;
`;
const LegalItem = styled.span<{ $w: number }>`
  width: ${(p) => p.$w}px;
  text-align: center;
  line-height: 16px;
  font-size: 11.25px;
  color: #000;
  background: rgba(245, 245, 245, 0.7);
  white-space: nowrap;
`;

const MapView = () => (
  <MapPanel>
    <MapCanvas viewBox="951 113 940 747">
      <Terrain />
      <NationalShield x={1201.7} y={151.6} n="66" />
      <NationalShield x={1255} y={389} n="66" />
      <NationalShield x={1268.7} y={782} n="66" />
      <NationalShield x={1578.7} y={471.8} n="169A" />
      <NationalShield x={1892.5} y={271.8} n="169A" />
      <StateShield x={1362.3} y={609} n="37" />
      <StateShield x={1469.3} y={692.3} n="37" />
      <StateShield x={1555.7} y={824.8} n="67" />
      {(Object.keys(kinds) as (keyof typeof kinds)[]).map((k) =>
        labels[k].map(([t, l, r, b]) => (
          <Halo key={t + b} x={l} y={b} textLength={r - l} lengthAdjust="spacingAndGlyphs" fontSize={kinds[k].size} fontWeight={kinds[k].weight} fill={kinds[k].fill}>
            {t}
          </Halo>
        )),
      )}
      {places.map(([x, y, c, g]) => <Poi key={`${x}-${y}`} x={x} y={y} color={c} glyph={g} />)}
      <DriverPin x={1456.7} y={381.5} />
      <DriverPin x={1420.7} y={459.3} />
      <DriverPin x={1229.6} y={611} />
      <Halo x="962.5" y="852.5" fontSize="21.5" textLength="62.5" lengthAdjust="spacingAndGlyphs" fontFamily="Inter, sans-serif" fontWeight="500">
        <tspan fill="#4285f4">G</tspan><tspan fill="#ea4335">o</tspan><tspan fill="#fbbc04">o</tspan><tspan fill="#4285f4">g</tspan><tspan fill="#34a853">l</tspan><tspan fill="#ea4335">e</tspan>
      </Halo>
    </MapCanvas>
    <TypeSwitch>
      <TypeButton $on>Map</TypeButton>
      <TypeButton>Satellite</TypeButton>
    </TypeSwitch>
    <Control $x={884} $y={12}>
      <svg width="21" height="20" fill="none" stroke="#666" strokeWidth="2.6"><path d="M1.3 7V1.3H7.5M13.5 1.3H19.7V7M19.7 13V18.7H13.5M7.5 18.7H1.3V13" /></svg>
    </Control>
    <Control $x={884} $y={594} $round>
      <svg width="26" height="26" fill="none" stroke="#666" strokeWidth="2.6"><path d="M9 5.8L13 1.9L17 5.8M9 20.2L13 24.1L17 20.2M5.8 9L1.9 13L5.8 17M20.2 9L24.1 13L20.2 17" /></svg>
    </Control>
    <Control $x={884} $y={675}>
      <svg width="20" height="34" viewBox="0 0 20 34">
        <path d="M4.5 12H15.5L18.6 22.5L16.4 23.6L14.5 19.5V33H11V25H9V33H5.5V19.5L3.6 23.6L1.4 22.5Z" fill="#fbbc2c" stroke="#98824f" strokeWidth=".9" strokeLinejoin="round" />
        <path d="M6.5 12H13.5L10 17.5Z" fill="#e58a3c" />
        <circle cx="10" cy="7" r="5.7" fill="#fbbc2c" stroke="#98824f" strokeWidth=".9" />
      </svg>
    </Control>
    <Legal>
      <LegalItem $w={110}>Keyboard shortcuts</LegalItem>
      <LegalItem $w={96}>Map data ©2025</LegalItem>
      <LegalItem $w={44.5}>Terms</LegalItem>
      <LegalItem $w={107}>Report a map error</LegalItem>
    </Legal>
  </MapPanel>
);

const nav = [
  { icon: LayoutDashboard, label: 'Dashboard' },
  { icon: MapIcon, label: 'Driver Tracking', active: true },
  { icon: Calendar, label: 'Assign Deliveries' },
  { icon: Users, label: 'Customer Time Slots' },
  { icon: Route, label: 'Optimize Routes' },
  { icon: Truck, label: 'Carriers' },
  { icon: ClipboardList, label: 'Order History' },
  { icon: Settings, label: 'Settings' },
];
const drivers: { name: string; vehicle: string; delivery: string; rating: string; count: number; status: Status }[] = [
  { name: 'Keerthan Kumar C', vehicle: 'van', delivery: 'P-4398', rating: '4.8', count: 342, status: 'Active' },
  { name: 'Shriya Bhat', vehicle: 'truck', delivery: 'P-8721', rating: '4.9', count: 512, status: 'Active' },
  { name: 'Bhanu Shashank', vehicle: 'car', delivery: 'None', rating: '4.6', count: 198, status: 'Inactive' },
  { name: 'Santhosh', vehicle: 'minivan', delivery: 'P-2341', rating: '4.7', count: 287, status: 'On Break' },
];

export default function App() {
  return (
    <>
      <Global />
      <Page>
        <Sidebar>
          <Brand>
            <BrandMark>NR</BrandMark>
            <BrandName>Nexustron</BrandName>
          </Brand>
          <Nav>
            {nav.map(({ icon: Icon, label, active }) => (
              <NavItem key={label} $active={active}><Icon />{label}</NavItem>
            ))}
          </Nav>
          <SideFoot><NavItem><LogOut />Sign Out</NavItem></SideFoot>
        </Sidebar>
        <Main>
          <Header>
            <div>
              <Title>Driver Tracking</Title>
              <Subtitle>Track your drivers in <b>real-time</b></Subtitle>
            </div>
            <SearchBox><Search /><SearchInput placeholder="Search drivers..." /></SearchBox>
          </Header>
          <Body>
            <ListColumn>
              <Tabs>
                <Tab $w={53} $active>All 4</Tab>
                <Tab $w={77}>Active 2</Tab>
                <Tab $w={89}>Inactive 2</Tab>
              </Tabs>
              <Cards>
                {drivers.map((d) => (
                  <Card key={d.name}>
                    <Avatar><DriverGlyph /></Avatar>
                    <Info>
                      <Name>{d.name}</Name>
                      <Meta>Vehicle: {d.vehicle}</Meta>
                      <Meta>Current Delivery: {d.delivery}</Meta>
                      <Rating>
                        <svg width="11" height="11" viewBox="0 0 24 24" fill="#ff9d0a"><path d="M12 0.5L15 9H24L16.8 14.3L19.5 23L12 17.8L4.5 23L7.2 14.3L0 9H9Z" /></svg>
                        {d.rating}<Dot />{d.count} deliveries
                      </Rating>
                    </Info>
                    <Badge $s={d.status}>{d.status}</Badge>
                  </Card>
                ))}
              </Cards>
            </ListColumn>
            <MapView />
          </Body>
        </Main>
      </Page>
      <DevBadge><span>N</span></DevBadge>
    </>
  );
}
